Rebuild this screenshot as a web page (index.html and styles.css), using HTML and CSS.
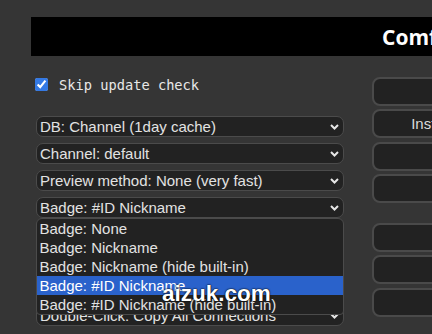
FILE: index.html
```html
<!DOCTYPE html>
<html>
<head>
<meta charset="utf-8">
<link rel="stylesheet" href="styles.css">
</head>
<body>
<div class="dialog">
  <div class="title">ComfyUI Manager Menu</div>
  <div class="content">
    <div class="left">
      <label class="check-row"><input type="checkbox" class="check" checked><span>Skip update check</span></label>
      <div class="selects">
        <div class="select"><span>DB: Channel (1day cache)</span><svg class="chev" width="9" height="6" viewBox="0 0 9 6"><polyline points="1,1 4.5,4.5 8,1" fill="none" stroke="#e6e6e6" stroke-width="2"/></svg></div>
        <div class="select"><span>Channel: default</span><svg class="chev" width="9" height="6" viewBox="0 0 9 6"><polyline points="1,1 4.5,4.5 8,1" fill="none" stroke="#e6e6e6" stroke-width="2"/></svg></div>
        <div class="select"><span>Preview method: None (very fast)</span><svg class="chev" width="9" height="6" viewBox="0 0 9 6"><polyline points="1,1 4.5,4.5 8,1" fill="none" stroke="#e6e6e6" stroke-width="2"/></svg></div>
        <div class="select open"><span>Badge: #ID Nickname</span><svg class="chev" width="9" height="6" viewBox="0 0 9 6"><polyline points="1,1 4.5,4.5 8,1" fill="none" stroke="#e6e6e6" stroke-width="2"/></svg>
          <ul class="options">
            <li>Badge: None</li>
            <li>Badge: Nickname</li>
            <li>Badge: Nickname (hide built-in)</li>
            <li class="sel">Badge: #ID Nickname</li>
            <li>Badge: #ID Nickname (hide built-in)</li>
          </ul>
        </div>
        <div class="select"><span>Share: None</span><svg class="chev" width="9" height="6" viewBox="0 0 9 6"><polyline points="1,1 4.5,4.5 8,1" fill="none" stroke="#e6e6e6" stroke-width="2"/></svg></div>
        <div class="select"><span>Component: Use workflow version</span><svg class="chev" width="9" height="6" viewBox="0 0 9 6"><polyline points="1,1 4.5,4.5 8,1" fill="none" stroke="#e6e6e6" stroke-width="2"/></svg></div>
        <div class="select"><span>Widget Value Recovery: Off</span><svg class="chev" width="9" height="6" viewBox="0 0 9 6"><polyline points="1,1 4.5,4.5 8,1" fill="none" stroke="#e6e6e6" stroke-width="2"/></svg></div>
        <div class="select"><span>Double-Click: Copy All Connections</span><svg class="chev" width="9" height="6" viewBox="0 0 9 6"><polyline points="1,1 4.5,4.5 8,1" fill="none" stroke="#e6e6e6" stroke-width="2"/></svg></div>
      </div>
    </div>
    <div class="right">
      <div class="btn-group">
        <button class="btn">Update All</button>
        <button class="btn">Install Missing Custom Nodes</button>
        <button class="btn">Model Manager</button>
        <button class="btn">Install via Git URL</button>
      </div>
      <div class="btn-group">
        <button class="btn">Update ComfyUI</button>
        <button class="btn">Fetch Updates</button>
        <button class="btn">Restart</button>
      </div>
    </div>
  </div>
  <div class="watermark">aizuk.com</div>
</div>
</body>
</html>
```

FILE: styles.css
```css
html, body {
  margin: 0;
  padding: 0;
  background: #353535;
  overflow: hidden;
  width: 432px;
  height: 334px;
}
.dialog {
  position: relative;
  padding: 17px 0 0 31px;
  width: 900px;
  font-family: "Liberation Sans", Arial, sans-serif;
}
.title {
  background: #000;
  color: #fff;
  height: 39px;
  display: flex;
  align-items: center;
  padding-left: 351px;
  font-family: "Open Sans", "Noto Sans", sans-serif;
  font-weight: 700;
  font-size: 21px;
  box-sizing: border-box;
}
.content {
  display: flex;
  margin-top: 21px;
}
.left {
  margin-left: 5px;
  width: 308px;
  display: flex;
  flex-direction: column;
}
.check-row {
  display: flex;
  align-items: center;
  height: 15px;
  gap: 11px;
  color: #e8e8e8;
  font-family: "DejaVu Sans Mono", "Liberation Mono", monospace;
  font-size: 13.7px;
}
.check {
  margin: 0 0 0 -1px;
  width: 13px;
  height: 13px;
  accent-color: #3479e4;
}
.selects {
  margin-top: 24px;
  display: flex;
  flex-direction: column;
  gap: 6px;
}
.select {
  position: relative;
  height: 21px;
  box-sizing: border-box;
  border: 1.5px solid #4b4b4b;
  border-radius: 7px;
  background: #222;
  color: #e2e2e2;
  font-size: 15px;
  display: flex;
  align-items: center;
  justify-content: space-between;
  padding: 0 4px 0 3px;
  white-space: nowrap;
}
.chev {
  flex: none;
  margin-top: 1px;
}
.options {
  position: absolute;
  z-index: 2;
  left: -1.5px;
  top: calc(100% + 1px);
  width: 308px;
  box-sizing: border-box;
  margin: 0;
  padding: 0;
  list-style: none;
  background: #222;
  border: 1px solid #4b4b4b;
  border-radius: 6px 6px 4px 4px;
  overflow: hidden;
}
.options li {
  height: 19px;
  line-height: 19px;
  padding-left: 3px;
  color: #e2e2e2;
  font-size: 15px;
}
.options li.sel {
  background: #2a62cb;
  color: #fff;
}
.right {
  margin-left: 28px;
  display: flex;
  flex-direction: column;
  gap: 20px;
}
.btn-group {
  display: flex;
  flex-direction: column;
  gap: 3.33px;
}
.btn {
  width: 276px;
  height: 29px;
  box-sizing: border-box;
  border: 2px solid #4a4a4a;
  border-radius: 8px;
  background: #222;
  color: #dcdcdc;
  font-family: "Liberation Sans", Arial, sans-serif;
  font-size: 15px;
  text-align: center;
  padding: 0;
  white-space: nowrap;
}
.watermark {
  position: absolute;
  left: 162px;
  top: 281px;
  z-index: 3;
  color: #fff;
  font-family: "Liberation Sans", Arial, sans-serif;
  font-weight: 700;
  font-size: 22.5px;
  text-shadow: 0 0 2px #000, 0 0 1px #000;
}
```
